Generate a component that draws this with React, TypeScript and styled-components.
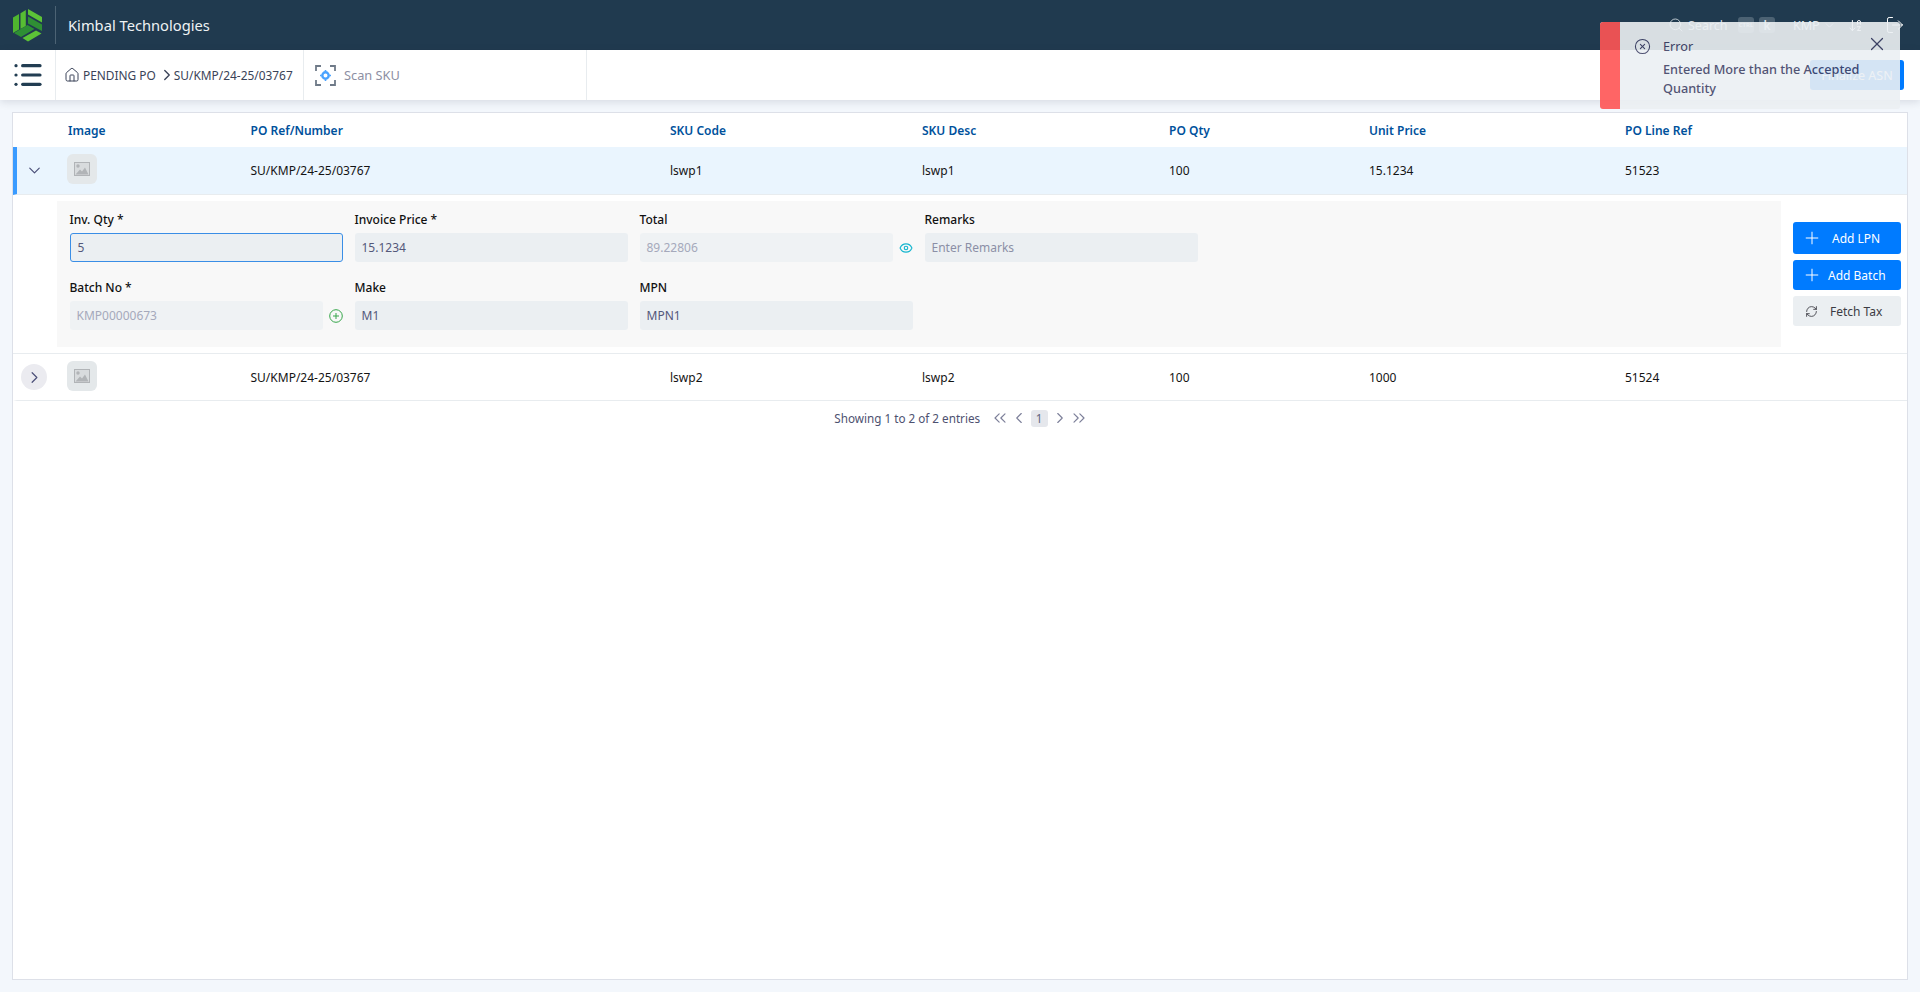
import React from 'react'
import styled, { createGlobalStyle } from 'styled-components'
import {
  ArrowDownAZ,
  ChevronDown,
  ChevronLeft,
  ChevronRight,
  ChevronsLeft,
  ChevronsRight,
  CircleX,
  Eye,
  House,
  List,
  LogOut,
  Plus,
  RefreshCw,
  Search,
  X,
} from 'lucide-react'

const GlobalStyle = createGlobalStyle`
  html, body {
    margin: 0;
    padding: 0;
    background: #f3f7fc;
  }
  * {
    box-sizing: border-box;
  }
  body {
    font-family: "Noto Sans", "Open Sans", sans-serif;
    font-size: 12px;
    color: #1b1b1b;
  }
`

const Page = styled.div`
  position: relative;
  width: 1920px;
  height: 992px;
  display: flex;
  flex-direction: column;
  overflow: hidden;
`

const TopBar = styled.header`
  height: 50px;
  flex: none;
  background: #203a4f;
  display: flex;
  align-items: center;
  color: #fff;
`

const LogoCell = styled.div`
  width: 56px;
  height: 38px;
  padding-left: 12px;
  border-right: 1px solid #4c6374;
  display: flex;
  align-items: center;
`

const Company = styled.div`
  margin-left: 12px;
  font-size: 14.7px;
  color: #eef2f4;
`

const TopRight = styled.div`
  margin-left: auto;
  display: flex;
  align-items: center;
  padding-right: 15.5px;
  color: #fff;
`

const SearchIcon = styled(Search)`
  color: #c9d2d8;
  margin-right: 4px;
`

const SearchText = styled.span`
  width: 50px;
  font-size: 12.5px;
  color: #d5dde2;
`

const KeyCap = styled.span<{ $small?: boolean }>`
  width: 16px;
  height: 16px;
  margin-right: 5px;
  border-radius: 3px;
  background: #4c6273;
  color: #dfe5e9;
  font-size: ${({ $small }) => ($small ? 6 : 12)}px;
  font-weight: 600;
  display: flex;
  align-items: center;
  justify-content: center;
`

const Org = styled.span`
  margin-left: 13px;
  width: 30px;
  font-size: 12.5px;
  color: #dfe5e9;
`

const OrgChevron = styled(ChevronDown)`
  color: #c9d2d8;
`

const SortIcon = styled(ArrowDownAZ)`
  margin-left: 12px;
`

const LogoutIcon = styled(LogOut)`
  margin-left: 21.5px;
`

const SubBar = styled.div`
  height: 50px;
  flex: none;
  background: #fff;
  box-shadow: 0 2px 8px rgba(40, 50, 70, 0.14);
  display: flex;
  align-items: stretch;
  position: relative;
`

const MenuCell = styled.div`
  width: 56px;
  border-right: 1px solid #e8ecef;
  display: flex;
  align-items: center;
  padding-left: 12px;
  color: #223d52;
`

const Crumbs = styled.div`
  width: 248px;
  border-right: 1px solid #e8ecef;
  padding-left: 8px;
  display: flex;
  align-items: center;
  gap: 2px;
  color: #3a4358;
  font-size: 11.9px;
  white-space: nowrap;
`

const CrumbHome = styled(House)`
  flex: none;
  margin-right: 1px;
`

const CrumbArrow = styled(ChevronRight)`
  flex: none;
  margin-right: -4px;
`

const ScanCell = styled.div`
  width: 283px;
  border-right: 1px solid #e8ecef;
  padding-left: 11px;
  display: flex;
  align-items: center;
  gap: 8px;
  color: #8d8fa3;
  font-size: 12.8px;
`

const FinalizeButton = styled.button`
  position: absolute;
  right: 16px;
  top: 10px;
  width: 94px;
  height: 30px;
  border: 0;
  border-radius: 3px;
  background: #007bff;
  color: #fff;
  font: inherit;
  font-size: 12.5px;
`

const Main = styled.main`
  flex: 1;
  padding: 12px;
  display: flex;
  min-height: 0;
`

const Panel = styled.section`
  flex: 1;
  background: #fff;
  border: 1px solid #dde0e8;
`

const Row = styled.div<{ $head?: boolean; $active?: boolean }>`
  display: grid;
  grid-template-columns: 51px 182.5px 419.5px 252px 247px 200px 256px 1fr;
  align-items: center;
  height: ${({ $head, $active }) => ($head ? 34 : $active ? 48 : 47)}px;
  background: ${({ $active }) => ($active ? '#eaf5fe' : '#fff')};
  border-bottom: ${({ $head }) => ($head ? '0' : '1px solid #e8ecef')};
  border-left: 4px solid ${({ $active }) => ($active ? '#3a9bff' : 'transparent')};
  color: ${({ $head }) => ($head ? '#00519c' : '#141414')};
  font-weight: ${({ $head }) => ($head ? 600 : 400)};
`

const Expander = styled.div<{ $round?: boolean }>`
  width: 26px;
  height: 26px;
  margin-left: 4px;
  border-radius: 50%;
  background: ${({ $round }) => ($round ? '#ebebf0' : 'transparent')};
  color: #4b4f78;
  display: flex;
  align-items: center;
  justify-content: center;
`

const Thumb = styled.div`
  width: 30px;
  height: 30px;
  margin: -3px 0 0 -1px;
  border-radius: 6px;
  background: #e4e8ea;
  display: flex;
  align-items: center;
  justify-content: center;
`

const Detail = styled.div`
  height: 159px;
  padding: 6px 6px 6px 44px;
  border-bottom: 1px solid #e8ecef;
  display: flex;
  gap: 12px;
`

const FormPanel = styled.div`
  width: 1724px;
  background: #f8f8f8;
  padding: 9px 0 0 12.5px;
  display: grid;
  grid-template-columns: repeat(4, 273px);
  grid-auto-rows: min-content;
  column-gap: 12px;
  row-gap: 16px;
`

const Field = styled.div`
  display: flex;
  flex-direction: column;
  gap: 3px;
`

const Label = styled.label`
  font-size: 12px;
  line-height: 20px;
  font-weight: 500;
  color: #111;
`

const InputRow = styled.div`
  display: flex;
  align-items: center;
  gap: 6px;
`

const Input = styled.div<{ $focus?: boolean; $muted?: boolean; $short?: boolean }>`
  height: 29px;
  flex: ${({ $short }) => ($short ? 'none' : 1)};
  width: ${({ $short }) => ($short ? '253px' : 'auto')};
  padding: 0 7px;
  border-radius: 3px;
  background: ${({ $muted }) => ($muted ? '#eff2f4' : '#ebeff2')};
  border: ${({ $focus }) => ($focus ? '1px solid #3a8ee6' : '0')};
  color: ${({ $muted }) => ($muted ? '#a5a9bb' : '#54587a')};
  font-size: 12px;
  line-height: ${({ $focus }) => ($focus ? 27 : 29)}px;
`

const Placeholder = styled.span`
  color: #8b8fa6;
`

const Actions = styled.div`
  width: 108px;
  padding-top: 21px;
  display: flex;
  flex-direction: column;
  gap: 6px;
`

const ActionButton = styled.button<{ $tall?: boolean; $plain?: boolean }>`
  height: ${({ $tall }) => ($tall ? 32 : 30)}px;
  border: 0;
  border-radius: 3px;
  background: ${({ $plain }) => ($plain ? '#ebeff2' : '#007bff')};
  color: ${({ $plain }) => ($plain ? '#3c3c44' : '#fff')};
  font: inherit;
  font-size: 12px;
  padding: 0 0 0 9px;
  display: flex;
  align-items: center;
  justify-content: flex-start;
`

const ActionText = styled.span<{ $left: number }>`
  margin-left: ${({ $left }) => $left}px;
`

const FetchIcon = styled(RefreshCw)`
  margin-left: 3px;
`

const Pager = styled.div`
  display: flex;
  justify-content: center;
  align-items: center;
  height: 34px;
  padding-left: 3px;
  color: #4d5170;
  font-size: 11.7px;
`

const PagerArrows = styled.div`
  margin-left: 9.5px;
  display: flex;
  align-items: center;
  color: #7c7f99;
`

const PageNo = styled.span`
  width: 17px;
  height: 17px;
  border-radius: 3px;
  background: #e5e7ec;
  color: #62657f;
  text-align: center;
  line-height: 17px;
  margin: 0 3px;
`

const Toast = styled.div`
  position: absolute;
  left: 1600px;
  top: 22px;
  width: 300px;
  height: 87px;
  border-radius: 3px;
  overflow: hidden;
  opacity: 0.9;
  background: #ecf0f3;
  display: flex;
  color: #3f4266;
`

const ToastStrip = styled.div`
  width: 20px;
  flex: none;
  background: #ff5555;
`

const ToastBody = styled.div`
  flex: 1;
  padding: 14px 12px 0 14px;
  display: grid;
  grid-template-columns: 29px 1fr 22px;
  grid-template-rows: 20px auto;
  row-gap: 4px;
  align-items: center;
  align-content: start;
`

const ToastTitle = styled.span`
  font-size: 12.7px;
`

const ToastClose = styled(X)`
  margin-top: -5px;
`

const ToastMessage = styled.div`
  grid-column: 2 / 4;
  font-size: 12.7px;
  line-height: 18.5px;
  font-weight: 500;
`

const ImageGlyph = () => (
  <svg width="16" height="14" viewBox="0 0 16 14">
    <rect x="0.5" y="0.5" width="15" height="13" fill="#d8dbdd" stroke="#b1b4b7" />
    <circle cx="4" cy="4" r="1.7" fill="#b1b4b7" />
    <path d="M1.5 12.5 L6 7.5 L8 9.5 L11 5.5 L14.5 12.5 Z" fill="#b1b4b7" />
  </svg>
)

const KimbalLogo = () => (
  <svg width="31" height="34" viewBox="0 0 31 34">
    <path d="M1 9.5 L7 6 V21.5 L1 25 Z" fill="#4fb62f" />
    <path d="M8.5 5.2 L13.8 2 V18 L8.5 21 Z" fill="#57bd33" />
    <path d="M16 1 L30 9 V14.5 L16 6.5 Z" fill="#5cc337" />
    <path d="M16 8.5 L30 16.5 V23 L16 15.5 Z" fill="#2f8f34" />
    <path d="M2 25 L15.5 17 L22.5 21 L9 29 Z" fill="#2e8f34" />
    <path d="M10.5 30 L24 22.5 L29.5 25.5 L16 33.5 Z" fill="#5cc337" />
  </svg>
)

const ScanIcon = () => (
  <svg width="21" height="21" viewBox="0 0 21 21" fill="none">
    <path d="M1 6 V1 H6 M15 1 H20 V6 M20 15 V20 H15 M6 20 H1 V15" stroke="#6f7a88" strokeWidth="1.8" />
    <circle cx="10.5" cy="10.5" r="3.2" stroke="#4aa3ff" strokeWidth="2.4" />
    <path d="M10.5 5 V6.5 M10.5 14.5 V16 M5 10.5 H6.5 M14.5 10.5 H16" stroke="#4aa3ff" strokeWidth="1.6" />
  </svg>
)

const columns = (ref: string, code: string, qty: string, price: string, line: string, open: boolean) => (
  <>
    <Expander $round={!open}>
      {open ? <ChevronDown size={19} strokeWidth={1.5} /> : <ChevronRight size={19} strokeWidth={1.5} />}
    </Expander>
    <Thumb>
      <ImageGlyph />
    </Thumb>
    <span>{ref}</span>
    <span>{code}</span>
    <span>{code}</span>
    <span>{qty}</span>
    <span>{price}</span>
    <span>{line}</span>
  </>
)

export default function App() {
  return (
    <Page>
      <GlobalStyle />
      <TopBar>
        <LogoCell>
          <KimbalLogo />
        </LogoCell>
        <Company>Kimbal Technologies</Company>
        <TopRight>
          <SearchIcon size={16} strokeWidth={1.4} />
          <SearchText>Search</SearchText>
          <KeyCap $small>CTRL</KeyCap>
          <KeyCap>k</KeyCap>
          <Org>KMP</Org>
          <OrgChevron size={13} strokeWidth={1.5} />
          <SortIcon size={15} strokeWidth={1.6} />
          <LogoutIcon size={20} strokeWidth={1.2} />
        </TopRight>
      </TopBar>
      <SubBar>
        <MenuCell>
          <List size={32} strokeWidth={2.4} />
        </MenuCell>
        <Crumbs>
          <CrumbHome size={16} strokeWidth={1.5} />
          PENDING PO
          <CrumbArrow size={18} strokeWidth={1.8} />
          SU/KMP/24-25/03767
        </Crumbs>
        <ScanCell>
          <ScanIcon />
          Scan SKU
        </ScanCell>
        <FinalizeButton>Finalize ASN</FinalizeButton>
      </SubBar>
      <Main>
        <Panel>
          <Row $head>
            <span />
            <span>Image</span>
            <span>PO Ref/Number</span>
            <span>SKU Code</span>
            <span>SKU Desc</span>
            <span>PO Qty</span>
            <span>Unit Price</span>
            <span>PO Line Ref</span>
          </Row>
          <Row $active>{columns('SU/KMP/24-25/03767', 'lswp1', '100', '15.1234', '51523', true)}</Row>
          <Detail>
            <FormPanel>
              <Field>
                <Label>Inv. Qty *</Label>
                <Input $focus>5</Input>
              </Field>
              <Field>
                <Label>Invoice Price *</Label>
                <Input>15.1234</Input>
              </Field>
              <Field>
                <Label>Total</Label>
                <InputRow>
                  <Input $muted $short>
                    89.22806
                  </Input>
                  <Eye size={16} color="#17b6cf" strokeWidth={2} />
                </InputRow>
              </Field>
              <Field>
                <Label>Remarks</Label>
                <Input>
                  <Placeholder>Enter Remarks</Placeholder>
                </Input>
              </Field>
              <Field>
                <Label>Batch No *</Label>
                <InputRow>
                  <Input $muted $short>
                    KMP00000673
                  </Input>
                  <svg width="14" height="14" viewBox="0 0 14 14" fill="none" stroke="#36a64a">
                    <circle cx="7" cy="7" r="6.3" />
                    <path d="M7 4 V10 M4 7 H10" />
                  </svg>
                </InputRow>
              </Field>
              <Field>
                <Label>Make</Label>
                <Input>M1</Input>
              </Field>
              <Field>
                <Label>MPN</Label>
                <Input>MPN1</Input>
              </Field>
            </FormPanel>
            <Actions>
              <ActionButton $tall>
                <Plus size={20} strokeWidth={1.2} />
                <ActionText $left={10}>Add LPN</ActionText>
              </ActionButton>
              <ActionButton>
                <Plus size={20} strokeWidth={1.2} />
                <ActionText $left={6}>Add Batch</ActionText>
              </ActionButton>
              <ActionButton $plain>
                <FetchIcon size={13} strokeWidth={1.6} />
                <ActionText $left={12}>Fetch Tax</ActionText>
              </ActionButton>
            </Actions>
          </Detail>
          <Row>{columns('SU/KMP/24-25/03767', 'lswp2', '100', '1000', '51524', false)}</Row>
          <Pager>
            Showing 1 to 2 of 2 entries
            <PagerArrows>
              <ChevronsLeft size={20} strokeWidth={1.4} />
              <ChevronLeft size={18} strokeWidth={1.5} />
              <PageNo>1</PageNo>
              <ChevronRight size={18} strokeWidth={1.5} />
              <ChevronsRight size={20} strokeWidth={1.4} />
            </PagerArrows>
          </Pager>
        </Panel>
      </Main>
      <Toast>
        <ToastStrip />
        <ToastBody>
          <CircleX size={17} strokeWidth={1.5} />
          <ToastTitle>Error</ToastTitle>
          <ToastClose size={22} strokeWidth={1.3} />
          <ToastMessage>Entered More than the Accepted Quantity</ToastMessage>
        </ToastBody>
      </Toast>
    </Page>
  )
}
